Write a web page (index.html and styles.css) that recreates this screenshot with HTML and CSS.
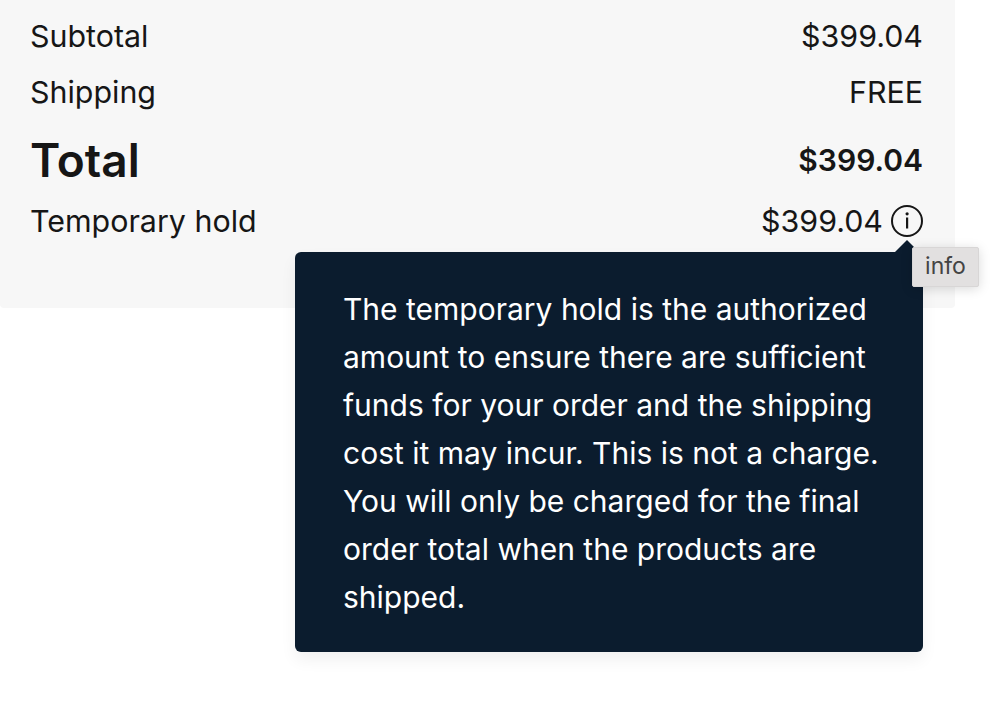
FILE: index.html
```html
<!DOCTYPE html>
<html lang="en">
<head>
    <meta charset="UTF-8">
    <title>Order summary</title>
    <link rel="stylesheet" href="styles.css">
</head>
<body>

    <!-- Order summary -->
    <div class="summary">
        <div class="row">
            <span>Subtotal</span>
            <span>$399.04</span>
        </div>
        <div class="row">
            <span>Shipping</span>
            <span>FREE</span>
        </div>
        <div class="row total">
            <span class="total-label">Total</span>
            <span class="total-value">$399.04</span>
        </div>
        <div class="row hold">
            <span>Temporary hold</span>
            <span class="hold-value">
                $399.04
                <svg class="info-icon" viewBox="0 0 32 32" width="32" height="32" aria-label="info">
                    <circle cx="16" cy="16" r="15" fill="none" stroke="#161616" stroke-width="2"/>
                    <rect x="15" y="12.5" width="2.2" height="11" fill="#161616"/>
                    <circle cx="16.1" cy="8.8" r="1.6" fill="#161616"/>
                </svg>
            </span>
        </div>
    </div>

    <!-- Tooltip -->
    <div class="tooltip">
        <span class="tooltip-caret"></span>
        The temporary hold is the authorized<br>
        amount to ensure there are sufficient<br>
        funds for your order and the shipping<br>
        cost it may incur. This is not a charge.<br>
        You will only be charged for the final<br>
        order total when the products are<br>
        shipped.
    </div>

    <div class="native-tip">info</div>

</body>
</html>
```

FILE: styles.css
```css
* {
    margin: 0;
    padding: 0;
    box-sizing: border-box;
}

body {
    font-family: "Inter", "Noto Sans", sans-serif;
    background-color: #fff;
    color: #161616;
    height: 712px;
    overflow: hidden;
}

/* Summary panel */
.summary {
    width: 955px;
    height: 308px;
    background-color: #f7f7f7;
    padding: 8px 32px 0 30px;
    border-radius: 0 0 4px 4px;
}

.row {
    display: flex;
    justify-content: space-between;
    align-items: center;
    height: 56px;
    font-size: 30.4px;
}

.total {
    height: 80px;
}

.hold {
    height: 42px;
}

.total-label {
    font-size: 46px;
    font-weight: 600;
}

.total-value {
    font-size: 30px;
    font-weight: 600;
}

.hold-value {
    display: flex;
    align-items: center;
    gap: 8px;
}

.info-icon {
    display: block;
}

/* Tooltip */
.tooltip {
    position: absolute;
    top: 252px;
    left: 295px;
    width: 628px;
    height: 400px;
    padding: 33px 48px;
    background-color: #0b1c2e;
    color: #fff;
    font-size: 30px;
    line-height: 48px;
    white-space: nowrap;
    border-radius: 6px;
    box-shadow: 0 8px 16px rgba(0, 0, 0, 0.06);
}

.tooltip-caret {
    position: absolute;
    top: -12px;
    right: 4px;
    width: 24px;
    height: 12px;
    background-color: #0b1c2e;
    clip-path: polygon(50% 0, 100% 100%, 0 100%);
}

.native-tip {
    position: absolute;
    top: 247px;
    left: 912px;
    width: 67px;
    height: 40px;
    background-color: #e2e0e0;
    border: 1px solid #d8d6d6;
    color: #444;
    font-size: 23px;
    line-height: 37px;
    text-align: center;
    border-radius: 2px;
    box-shadow: 0 2px 12px rgba(0, 0, 0, 0.15);
}
```
